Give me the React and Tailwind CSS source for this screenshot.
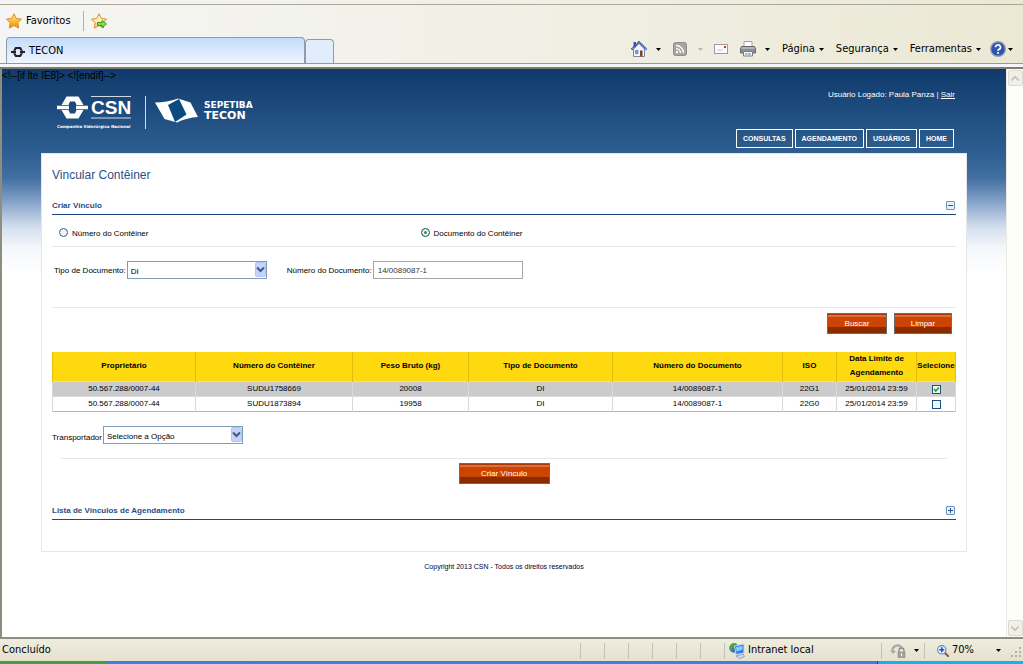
import { useState } from 'react';
import clsx from 'clsx';

const NAV_ITEMS = ['CONSULTAS', 'AGENDAMENTO', 'USUÁRIOS', 'HOME'];

const COLUMNS = [
  { label: 'Proprietário', width: 'w-[143px]' },
  { label: 'Número do Contêiner', width: 'w-[157px]' },
  { label: 'Peso Bruto (kg)', width: 'w-[116px]' },
  { label: 'Tipo de Documento', width: 'w-[144px]' },
  { label: 'Número do Documento', width: 'w-[170px]' },
  { label: 'ISO', width: 'w-[54px]' },
  { label: 'Data Limite de Agendamento', width: 'w-[80px]' },
  { label: 'Selecione', width: 'w-[39px]' },
];

const ROWS = [
  ['50.567.288/0007-44', 'SUDU1758669', '20008', 'DI', '14/0089087-1', '22G1', '25/01/2014 23:59'],
  ['50.567.288/0007-44', 'SUDU1873894', '19958', 'DI', '14/0089087-1', '22G0', '25/01/2014 23:59'],
];

/* ---------- Icons ---------- */

function StarIcon({ withArrow }) {
  return (
    <svg className="w-4 h-4 shrink-0" viewBox="0 0 16 16">
      <defs>
        <linearGradient id="star" x1="0" y1="0" x2="0" y2="1">
          <stop offset="0" stopColor="#ffe9a0" />
          <stop offset="0.5" stopColor="#fdbf3a" />
          <stop offset="1" stopColor="#f08a10" />
        </linearGradient>
        <linearGradient id="star-light" x1="0" y1="0" x2="0" y2="1">
          <stop offset="0" stopColor="#fffbe8" />
          <stop offset="1" stopColor="#fdd877" />
        </linearGradient>
      </defs>
      <path
        d="M8 .8l2.300 4.700 5.200.7-3.800 3.600 1 5.200L8 12.500 3.300 15l1-5.200L.5 6.200l5.200-.7z"
        fill={withArrow ? 'url(#star-light)' : 'url(#star)'}
        stroke="#d98c1c"
        strokeLinejoin="round"
      />
      {withArrow && (
        <path d="M6.500 9.500h4.500V7.500l4.500 3.500-4.500 3.500v-2H6.500z" fill="#7ee04a" stroke="#2f8f2a" strokeWidth="0.9" />
      )}
    </svg>
  );
}

function CsnIcon() {
  return (
    <svg className="h-3 shrink-0" width="14" height="12" viewBox="0 0 14 12" fill="#222">
      <path d="M2 4.800L4.200 1h5.600L12 4.800H9.500L8.500 3h-3l-1 1.800zM2 7.200L4.200 11h5.600L12 7.200H9.500L8.500 9h-3l-1-1.800z" />
      <path d="M0 5h5v2H0zM9 5h5v2H9z" />
    </svg>
  );
}

function HomeIcon() {
  return (
    <svg className="w-4 h-4" viewBox="0 0 16 16">
      <path d="M2.500 1h2.500v5H2.500z" fill="#3556c0" />
      <path d="M2.500 8L8 2.500 13.500 8v7.500h-11z" fill="#f4f4f8" stroke="#8088a0" />
      <path d="M.5 8.500L8 1l7.500 7.500" fill="none" stroke="#2b4fb5" strokeWidth="2" strokeDasharray="1.500 .5" />
      <path d="M4.500 9.500H7v3H4.500z" fill="#7fa6e0" stroke="#3f5f9f" strokeWidth="0.6" />
      <path d="M9 9.500h2.500v6H9z" fill="#7a4a28" />
    </svg>
  );
}

function FeedIcon() {
  return (
    <svg className="w-3.5 h-3.5" viewBox="0 0 14 14">
      <rect x="0.5" y="0.5" width="13" height="13" rx="2" fill="#a5a5a2" stroke="#8d8d8a" />
      <circle cx="4" cy="10" r="1.200" fill="#fff" />
      <path d="M3 6.500A4.500 4.500 0 0 1 7.500 11M3 3.500A7.500 7.500 0 0 1 10.500 11" fill="none" stroke="#fff" strokeWidth="1.300" />
    </svg>
  );
}

function MailIcon() {
  return (
    <svg className="w-3.5 h-2.5" width="14" height="10" viewBox="0 0 14 10">
      <rect x="0.5" y="0.5" width="13" height="9" fill="#fbfbfd" stroke="#9a9aa4" />
      <path d="M10 2h2v2h-2z" fill="#d8301c" />
      <path d="M3 6h6" stroke="#c8c8d0" />
    </svg>
  );
}

function PrinterIcon() {
  return (
    <svg className="w-4 h-4" viewBox="0 0 16 16">
      <path d="M4 .5h8V6H4z" fill="#fdfdfd" stroke="#9aa2b0" />
      <path d="M1.500 5.500h13l1 2v4.500H.5V7.500z" fill="#8e9094" stroke="#66696d" />
      <path d="M1.500 7h13" stroke="#d4d6d8" />
      <path d="M3.500 10.500h9v4.500h-9z" fill="#f4f6f8" stroke="#7a7e84" />
      <path d="M5 13h2.500" stroke="#3fa04a" />
      <path d="M8 13h2.500" stroke="#3f6fd0" />
    </svg>
  );
}

function HelpIcon() {
  return (
    <svg className="w-4 h-4" viewBox="0 0 16 16">
      <circle cx="8" cy="8" r="7.300" fill="#2d55b0" stroke="#8f9bb5" strokeWidth="1.400" />
      <path d="M5.500 6.300a2.500 2.300 0 1 1 3.600 2c-.8.400-1.100.8-1.100 1.600" fill="none" stroke="#fff" strokeWidth="1.700" />
      <circle cx="8" cy="12" r="1.100" fill="#fff" />
    </svg>
  );
}

function Caret({ muted }) {
  return (
    <svg className="w-[5px] h-[3px] shrink-0" viewBox="0 0 5 3">
      <path d="M0 0h5L2.500 3z" fill={muted ? '#b8b6a8' : '#000'} />
    </svg>
  );
}

function NetworkIcon() {
  return (
    <svg className="w-4 h-4" viewBox="0 0 16 16">
      <circle cx="5" cy="5" r="4.700" fill="#2f6fc8" />
      <path d="M1 3c2-3 5-3 7-2L6 4 3 5.500 4 9C1 8 0 5 1 3z" fill="#4caa3c" />
      <path d="M5.500 3l9.500-2v9l-8 1.500z" fill="#2f7fe8" stroke="#c8d4e8" />
      <path d="M7 4.200l6.500-1.300v3.600L7.500 8.500z" fill="#8cd0fa" />
      <path d="M7 13l7-2 1.500 2.500-5 2z" fill="#d4dae8" stroke="#6a78a0" strokeWidth="0.6" />
    </svg>
  );
}

function ProtectedIcon() {
  return (
    <svg className="w-4 h-3.5" width="16" height="14" viewBox="0 0 16 14">
      <path d="M2.500 6.500a5 5 0 0 1 8-4l1.500 1.500" fill="none" stroke="#a8a8a4" strokeWidth="2.200" />
      <path d="M0 6l3 4 3-3z" fill="#a8a8a4" />
      <path d="M9 8V6.500a2.500 2.500 0 0 1 5 0V8" fill="none" stroke="#8c8c88" strokeWidth="1.300" />
      <path d="M8 8h7v5.500H8z" fill="#a4a4a0" stroke="#858580" strokeWidth="0.6" />
      <path d="M11.500 9.500v2.500" stroke="#fff" />
    </svg>
  );
}

function ZoomIcon() {
  return (
    <svg className="w-3 h-3" viewBox="0 0 12 12">
      <path d="M7.500 7.500L11 11" stroke="#8b5a2b" strokeWidth="2" strokeLinecap="round" />
      <circle cx="4.800" cy="4.800" r="4.200" fill="#e8f2ff" stroke="#5f86c8" strokeWidth="1.100" />
      <path d="M4.800 2.300v5M2.300 4.800h5" stroke="#1d50b8" strokeWidth="1.600" />
    </svg>
  );
}

function ToggleIcon({ open }) {
  return (
    <svg className="w-[9px] h-[9px] block" viewBox="0 0 9 9">
      <rect x="0.5" y="0.5" width="8" height="8" rx="0.5" fill="#e6f0fa" stroke="#6f90bb" />
      <path d={open ? 'M2 4.500h5' : 'M2 4.500h5M4.500 2v5'} stroke="#2a568c" />
    </svg>
  );
}

function Logo() {
  return (
    <svg className="w-[202px] h-[38px]" viewBox="0 0 202 38">
      <g fill="#fff">
        <path d="M4.500 12L9.500 3.500h12L26.500 12H19.500l-1.500-3.500h-5L11.500 12zM4.500 17l5 8.500h12l5-8.500H19.500l-1.500 3.500h-5L11.500 17z" />
        <path d="M0 12.800h12v3.500H0zM19 12.800h12v3.500H19z" />
      </g>
      <path d="M34 3.500h40M34 25h40M88.500 3v33" fill="none" stroke="#fff" opacity="0.8" />
      <text x="34" y="20.500" fill="#fff" fontFamily="Liberation Sans, sans-serif" fontSize="19" fontWeight="700">
        CSN
      </text>
      <text x="0" y="35" fill="#fff" fontFamily="DejaVu Sans, sans-serif" fontSize="4" fontWeight="700">
        Companhia Siderúrgica Nacional
      </text>
      <path d="M98 9.500Q110 9.500 121 5.500L133.500 9.500L141 24Q130 24.500 120 29.500L107.500 26z" fill="#fff" />
      <path d="M111 12l11-6 7.500 15.500L118 29z" fill="#0b4a7f" />
      <g fill="#fff" fontFamily="DejaVu Sans, sans-serif" fontWeight="700">
        <text x="147" y="15" fontSize="9">
          SEPETIBA
        </text>
        <text x="147" y="26" fontSize="11">
          TECON
        </text>
      </g>
    </svg>
  );
}

/* ---------- Controls ---------- */

function ActionButton({ children, className }) {
  return (
    <button
      type="button"
      className={clsx(
        'h-[21px] border border-[#6b6b68] pt-px text-[8px] leading-none text-white',
        'bg-[linear-gradient(#a83a08_0px,#a83a08_1px,#dd6f3c_1px,#dd6f3c_3px,#cc4400_3px,#cc4400_13px,#8a2c00_13px)]',
        className
      )}
    >
      {children}
    </button>
  );
}

function SelectBox({ id, option }) {
  return (
    <div className="relative w-[140px] h-[18px]">
      <select
        id={id}
        className="w-full h-full appearance-none border border-[#7f9db9] bg-white pl-[3px] pt-[4px] text-[8px] leading-none text-black"
      >
        <option>{option}</option>
      </select>
      <svg className="absolute right-px top-px w-[11px] h-4 pointer-events-none" viewBox="0 0 11 16">
        <rect x="0.5" y="0.500" width="10" height="14" rx="1" fill="#c3d3fb" stroke="#b2c5f2" />
        <path d="M2 5.500l3.500 3.500L9 5.500" fill="none" stroke="#43587f" strokeWidth="2" />
      </svg>
    </div>
  );
}

function Radio({ id, label, checked, onChange }) {
  return (
    <div className="flex items-center pl-[7px]">
      <input
        id={id}
        type="radio"
        name="criterio"
        checked={checked}
        onChange={onChange}
        className="w-[9px] h-[9px] mb-1 shrink-0 appearance-none rounded-full border border-[#3a628f] bg-[#f4f4f0] checked:bg-[#21a121] checked:shadow-[inset_0_0_0_2px_#f4f4f0]"
      />
      <label htmlFor={id} className="pl-1">
        {label}
      </label>
    </div>
  );
}

function SectionHeader({ title, open, onToggle, className }) {
  return (
    <div className={clsx('flex items-center justify-between border-b border-[#1c4a80] pb-[2px]', className)}>
      <h2 className="font-bold text-[#1f4e86]">{title}</h2>
      <button type="button" aria-label={title} aria-expanded={open} onClick={onToggle} className="mb-px mr-px">
        <ToggleIcon open={open} />
      </button>
    </div>
  );
}

/* ---------- Browser chrome ---------- */

function BrowserBar() {
  return (
    <header className="bg-linear-to-r from-[#f5f5f5] via-[#f1f0e6] to-[#ebe8d4] text-[11px] text-black">
      <div className="h-[5px] border-b border-[#aca899]" />
      <div className="flex h-8 items-center pl-[6px]">
        <button type="button" className="flex items-center gap-1">
          <StarIcon />
          <span className="pt-px">Favoritos</span>
        </button>
        <span className="ml-3 h-5 border-l border-[#b5b0a0]" />
        <button type="button" aria-label="Adicionar a Favoritos" className="ml-[7px]">
          <StarIcon withArrow />
        </button>
      </div>
      <div className="flex items-end justify-between border-b border-[#919b9c]">
        <div className="flex items-end pl-[6px]">
          <div className="flex h-[26px] w-[299px] items-center gap-1 rounded-t border border-b-0 border-[#8f9bab] bg-linear-to-b from-[#c4dcfb] to-[#eff5fe] pl-1 pt-[2px]">
            <CsnIcon />
            TECON
          </div>
          <button
            type="button"
            aria-label="Nova guia"
            className="h-6 w-[29px] rounded-t border border-b-0 border-[#8f9bab] bg-[#e2edfb]"
          />
        </div>
        <div className="flex h-[26px] items-center pb-[2px] pr-[10px]">
          <HomeIcon />
          <span className="ml-[9px] mr-3">
            <Caret />
          </span>
          <FeedIcon />
          <span className="mx-[11px]">
            <Caret muted />
          </span>
          <MailIcon />
          <span className="ml-3">
            <PrinterIcon />
          </span>
          <span className="ml-[9px] mr-3">
            <Caret />
          </span>
          <div className="flex gap-3">
            {['Página', 'Segurança', 'Ferramentas'].map((item) => (
              <button key={item} type="button" className="flex items-center gap-1">
                {item}
                <Caret />
              </button>
            ))}
          </div>
          <button type="button" aria-label="Ajuda" className="ml-[9px] flex items-center gap-[2px]">
            <HelpIcon />
            <Caret />
          </button>
        </div>
      </div>
      <div className="h-[5px] border-b-2 border-[#7d7a6e] bg-[#f4f6fb]" />
    </header>
  );
}

function ScrollBar() {
  const cell = 'flex h-4 w-[15px] items-center justify-center rounded-xs border border-[#dddbd0] bg-[#f0efe8]';
  return (
    <div className="flex w-[19px] shrink-0 flex-col items-center justify-between border-l border-r-2 border-l-[#ebebe4] border-r-[#ece9d8] bg-[#fefef9] py-px">
      <div className={cell}>
        <svg className="h-[5px] w-2" viewBox="0 0 8 5">
          <path d="M0 4.500L4 .8l4 3.700" fill="none" stroke="#c2c1b8" strokeWidth="1.600" />
        </svg>
      </div>
      <div className={cell}>
        <svg className="h-[5px] w-2" viewBox="0 0 8 5">
          <path d="M0 .5L4 4.200 8 .5" fill="none" stroke="#c2c1b8" strokeWidth="1.600" />
        </svg>
      </div>
    </div>
  );
}

function StatusBar() {
  return (
    <footer className="text-[11px] text-black">
      <div className="flex h-6 items-center border-t-2 border-[#8f8c80] bg-linear-to-b from-[#efedde] to-[#e4e1cf] pt-px">
        <span className="flex-1 pl-[2px]">Concluído</span>
        {[0, 1, 2, 3, 4, 5].map((i) => (
          <span key={i} className="h-4 w-6 border-l border-[#c5c2b2]" />
        ))}
        <div className="flex h-4 w-[157px] items-center gap-[3px] border-l border-[#c5c2b2] pl-1">
          <NetworkIcon />
          Intranet local
        </div>
        <div className="flex h-4 w-[43px] items-center gap-2 border-l border-[#c5c2b2] pl-2">
          <ProtectedIcon />
          <Caret />
        </div>
        <div className="flex h-4 w-[99px] items-center border-l border-[#c5c2b2] pl-3">
          <ZoomIcon />
          <span className="w-[47px] pl-[3px]">70%</span>
          <Caret />
          <svg className="ml-auto h-3 w-3 self-end" viewBox="0 0 12 12" fill="#b5b2a0">
            <path d="M8 0h2v2H8zM4 4h2v2H4zM8 4h2v2H8zM0 8h2v2H0zM4 8h2v2H4zM8 8h2v2H8z" />
          </svg>
        </div>
      </div>
      <div className="flex h-[3px] bg-[#3a80e8]">
        <div className="w-[107px] rounded-tr bg-[#4a9c48]" />
        <div className="ml-auto w-[146px] border-l border-[#0a4f90] bg-[#19aef0]" />
      </div>
    </footer>
  );
}

/* ---------- Page ---------- */

function ContainerTable({ selected, onToggle }) {
  return (
    <table className="mt-[18px] w-full table-fixed border-collapse text-center text-black">
      <thead className="bg-[#ffd90f]">
        <tr className="h-[29px]">
          {COLUMNS.map((col) => (
            <th key={col.label} className={clsx('border-x border-[#e3bd08] p-0 leading-[14px]', col.width)}>
              {col.label}
            </th>
          ))}
        </tr>
      </thead>
      <tbody>
        {ROWS.map((row, i) => (
          <tr
            key={row[1]}
            className="h-[15px] border-t border-t-[#dcdcdc] odd:bg-[#cbcbcb] last:border-b last:border-b-[#e0bb10]"
          >
            {row.map((cell, j) => (
              <td key={j} className="border-x border-[#d8d8d8] p-0 pt-px">
                {cell}
              </td>
            ))}
            <td className="border-x border-[#d8d8d8] p-0 pt-px">
              <span className="mx-auto grid w-[9px]">
                <input
                  type="checkbox"
                  aria-label={`Selecione ${row[1]}`}
                  checked={selected[i]}
                  onChange={() => onToggle(i)}
                  className="col-start-1 row-start-1 h-[9px] w-[9px] appearance-none border border-[#1c5180] bg-[#f6f6f3]"
                />
                {selected[i] && (
                  <svg className="pointer-events-none col-start-1 row-start-1 h-[9px] w-[9px]" viewBox="0 0 9 9">
                    <path d="M2 4l1.700 2L7 2.500" fill="none" stroke="#21a121" strokeWidth="1.600" />
                  </svg>
                )}
              </span>
            </td>
          </tr>
        ))}
      </tbody>
    </table>
  );
}

export default function App() {
  const [criterio, setCriterio] = useState('documento');
  const [numero, setNumero] = useState('14/0089087-1');
  const [selected, setSelected] = useState([true, false]);
  const [criarOpen, setCriarOpen] = useState(true);
  const [listaOpen, setListaOpen] = useState(false);

  const toggleRow = (index) => setSelected(selected.map((value, i) => (i === index ? !value : value)));

  return (
    <div className="flex min-h-screen flex-col font-['DejaVu_Sans_Condensed','DejaVu_Sans',sans-serif]">
      <BrowserBar />

      <div className="flex flex-1 border-l-2 border-[#8f8c80]">
        <div className="flex-1 bg-white bg-[linear-gradient(#0f3a6b_0px,#2f5f92_86px,#4470a3_110px,#88a5cb_134px,#d3deee_158px,#f4f7fb_178px,#ffffff_205px)] font-['Liberation_Sans',Arial,sans-serif] text-[8px] leading-3 text-black">
          <p className="h-4 pt-px text-[10px]">{'<!--[if lte IE8]> <![endif]-->'}</p>

          {/* Brand and navigation */}
          <div className="mx-[39px] flex h-[68px] justify-between pl-4 pr-3 text-white">
            <div className="pt-2">
              <Logo />
            </div>
            <div className="flex flex-col items-end justify-between pb-[5px] pt-1">
              <p>
                Usuário Logado: Paula Panza |{' '}
                <a href="#sair" className="underline">
                  Sair
                </a>
              </p>
              <nav className="flex gap-[2px] pr-px">
                {NAV_ITEMS.map((item) => (
                  <a
                    key={item}
                    href="#menu"
                    className="flex h-[19px] items-center border border-white px-[6px] pt-px text-[7px] font-bold"
                  >
                    {item}
                  </a>
                ))}
              </nav>
            </div>
          </div>

          <main className="mx-[39px] border border-[#e6e6e6] bg-white px-[10px] pb-[31px] pt-[13px]">
            <h1 className="text-xs leading-4 text-[#2c5285]">Vincular Contêiner</h1>

            <SectionHeader
              title="Criar Vínculo"
              open={criarOpen}
              onToggle={() => setCriarOpen(!criarOpen)}
              className="mt-[17px]"
            />

            {criarOpen && (
              <>
                <div className="grid h-8 grid-cols-[2fr_3fr] border-b border-[#e8e8e2] pt-[7px]">
                  <Radio
                    id="criterio-numero"
                    label="Número do Contêiner"
                    checked={criterio === 'numero'}
                    onChange={() => setCriterio('numero')}
                  />
                  <Radio
                    id="criterio-documento"
                    label="Documento do Contêiner"
                    checked={criterio === 'documento'}
                    onChange={() => setCriterio('documento')}
                  />
                </div>

                <div className="flex items-center border-b border-[#e8e8e2] pb-7 pl-[2px] pt-[14px]">
                  <label htmlFor="tipo" className="mr-px pt-[2px]">
                    Tipo de Documento:
                  </label>
                  <SelectBox id="tipo" option="DI" />
                  <label htmlFor="numero" className="ml-5 mr-px pt-[2px]">
                    Número do Documento:
                  </label>
                  <input
                    id="numero"
                    type="text"
                    value={numero}
                    onChange={(e) => setNumero(e.target.value)}
                    className="h-[18px] w-[150px] border border-[#a5a5a5] px-1 text-[#333]"
                  />
                </div>

                <div className="flex justify-end gap-[7px] pr-1 pt-[5px]">
                  <ActionButton className="w-[60px]">Buscar</ActionButton>
                  <ActionButton className="w-[58px]">Limpar</ActionButton>
                </div>

                <ContainerTable selected={selected} onToggle={toggleRow} />

                <div className="mt-[14px] flex items-end">
                  <label htmlFor="transportador" className="mr-px">
                    Transportador
                  </label>
                  <SelectBox id="transportador" option="Selecione a Opção" />
                </div>

                <div className="mx-[9px] mt-[14px] border-t border-[#e8e8e2] pt-1 text-center">
                  <ActionButton className="w-[91px]">Criar Vínculo</ActionButton>
                </div>
              </>
            )}

            <SectionHeader
              title="Lista de Vínculos de Agendamento"
              open={listaOpen}
              onToggle={() => setListaOpen(!listaOpen)}
              className="mt-[21px]"
            />
          </main>

          <p className="mt-[9px] text-center text-[7px] text-[#000030]">
            Copyright 2013 CSN - Todos os direitos reservados
          </p>
        </div>
        <ScrollBar />
      </div>

      <StatusBar />
    </div>
  );
}
